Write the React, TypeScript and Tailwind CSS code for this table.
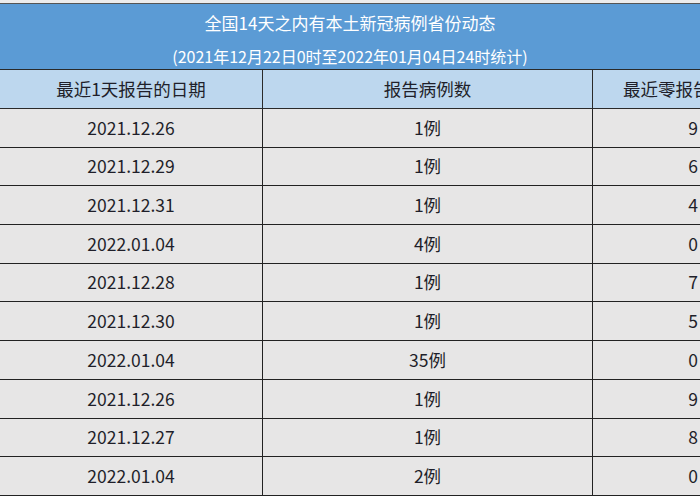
import React from "react";

const rows: [string, string, string][] = [
  ["2021.12.26", "1例", "9"],
  ["2021.12.29", "1例", "6"],
  ["2021.12.31", "1例", "4"],
  ["2022.01.04", "4例", "0"],
  ["2021.12.28", "1例", "7"],
  ["2021.12.30", "1例", "5"],
  ["2022.01.04", "35例", "0"],
  ["2021.12.26", "1例", "9"],
  ["2021.12.27", "1例", "8"],
  ["2022.01.04", "2例", "0"],
];

export default function App() {
  return (
    <div
      className="w-[700px] h-[500px] overflow-hidden bg-white text-[#1f1f2a]"
      style={{ fontFamily: '"Noto Sans CJK SC", "Noto Sans", sans-serif' }}
    >
      <div className="h-[3px] bg-[#ececec]" />
      <div className="border-t border-[#555] bg-[#5b9bd5] text-white h-[66px] flex flex-col items-center">
        <div className="text-[17px] leading-[20px] mt-[9px]">全国14天之内有本土新冠病例省份动态</div>
        <div className="text-[16px] leading-[20px] mt-[13px]">(2021年12月22日0时至2022年01月04日24时统计)</div>
      </div>
      <div className="w-[793px]">
        <div className="grid grid-cols-[263px_330px_200px] h-[40px] bg-[#bdd7ee] border-t border-b border-[#2a2a2a] text-[17.5px]">
          <div className="flex items-center justify-center border-r border-[#2a2a2a]">最近1天报告的日期</div>
          <div className="flex items-center justify-center border-r border-[#2a2a2a]">报告病例数</div>
          <div className="flex items-center justify-center">最近零报告后天数</div>
        </div>
        {rows.map((r, i) => (
          <div
            key={i}
            className="grid grid-cols-[263px_330px_200px] h-[38.7px] bg-[#e7e6e6] border-b border-[#222] text-[17.5px]"
          >
            <div className="flex items-center justify-center border-r border-[#222]">{r[0]}</div>
            <div className="flex items-center justify-center border-r border-[#222]">{r[1]}</div>
            <div className="flex items-center justify-center">{r[2]}</div>
          </div>
        ))}
      </div>
    </div>
  );
}
